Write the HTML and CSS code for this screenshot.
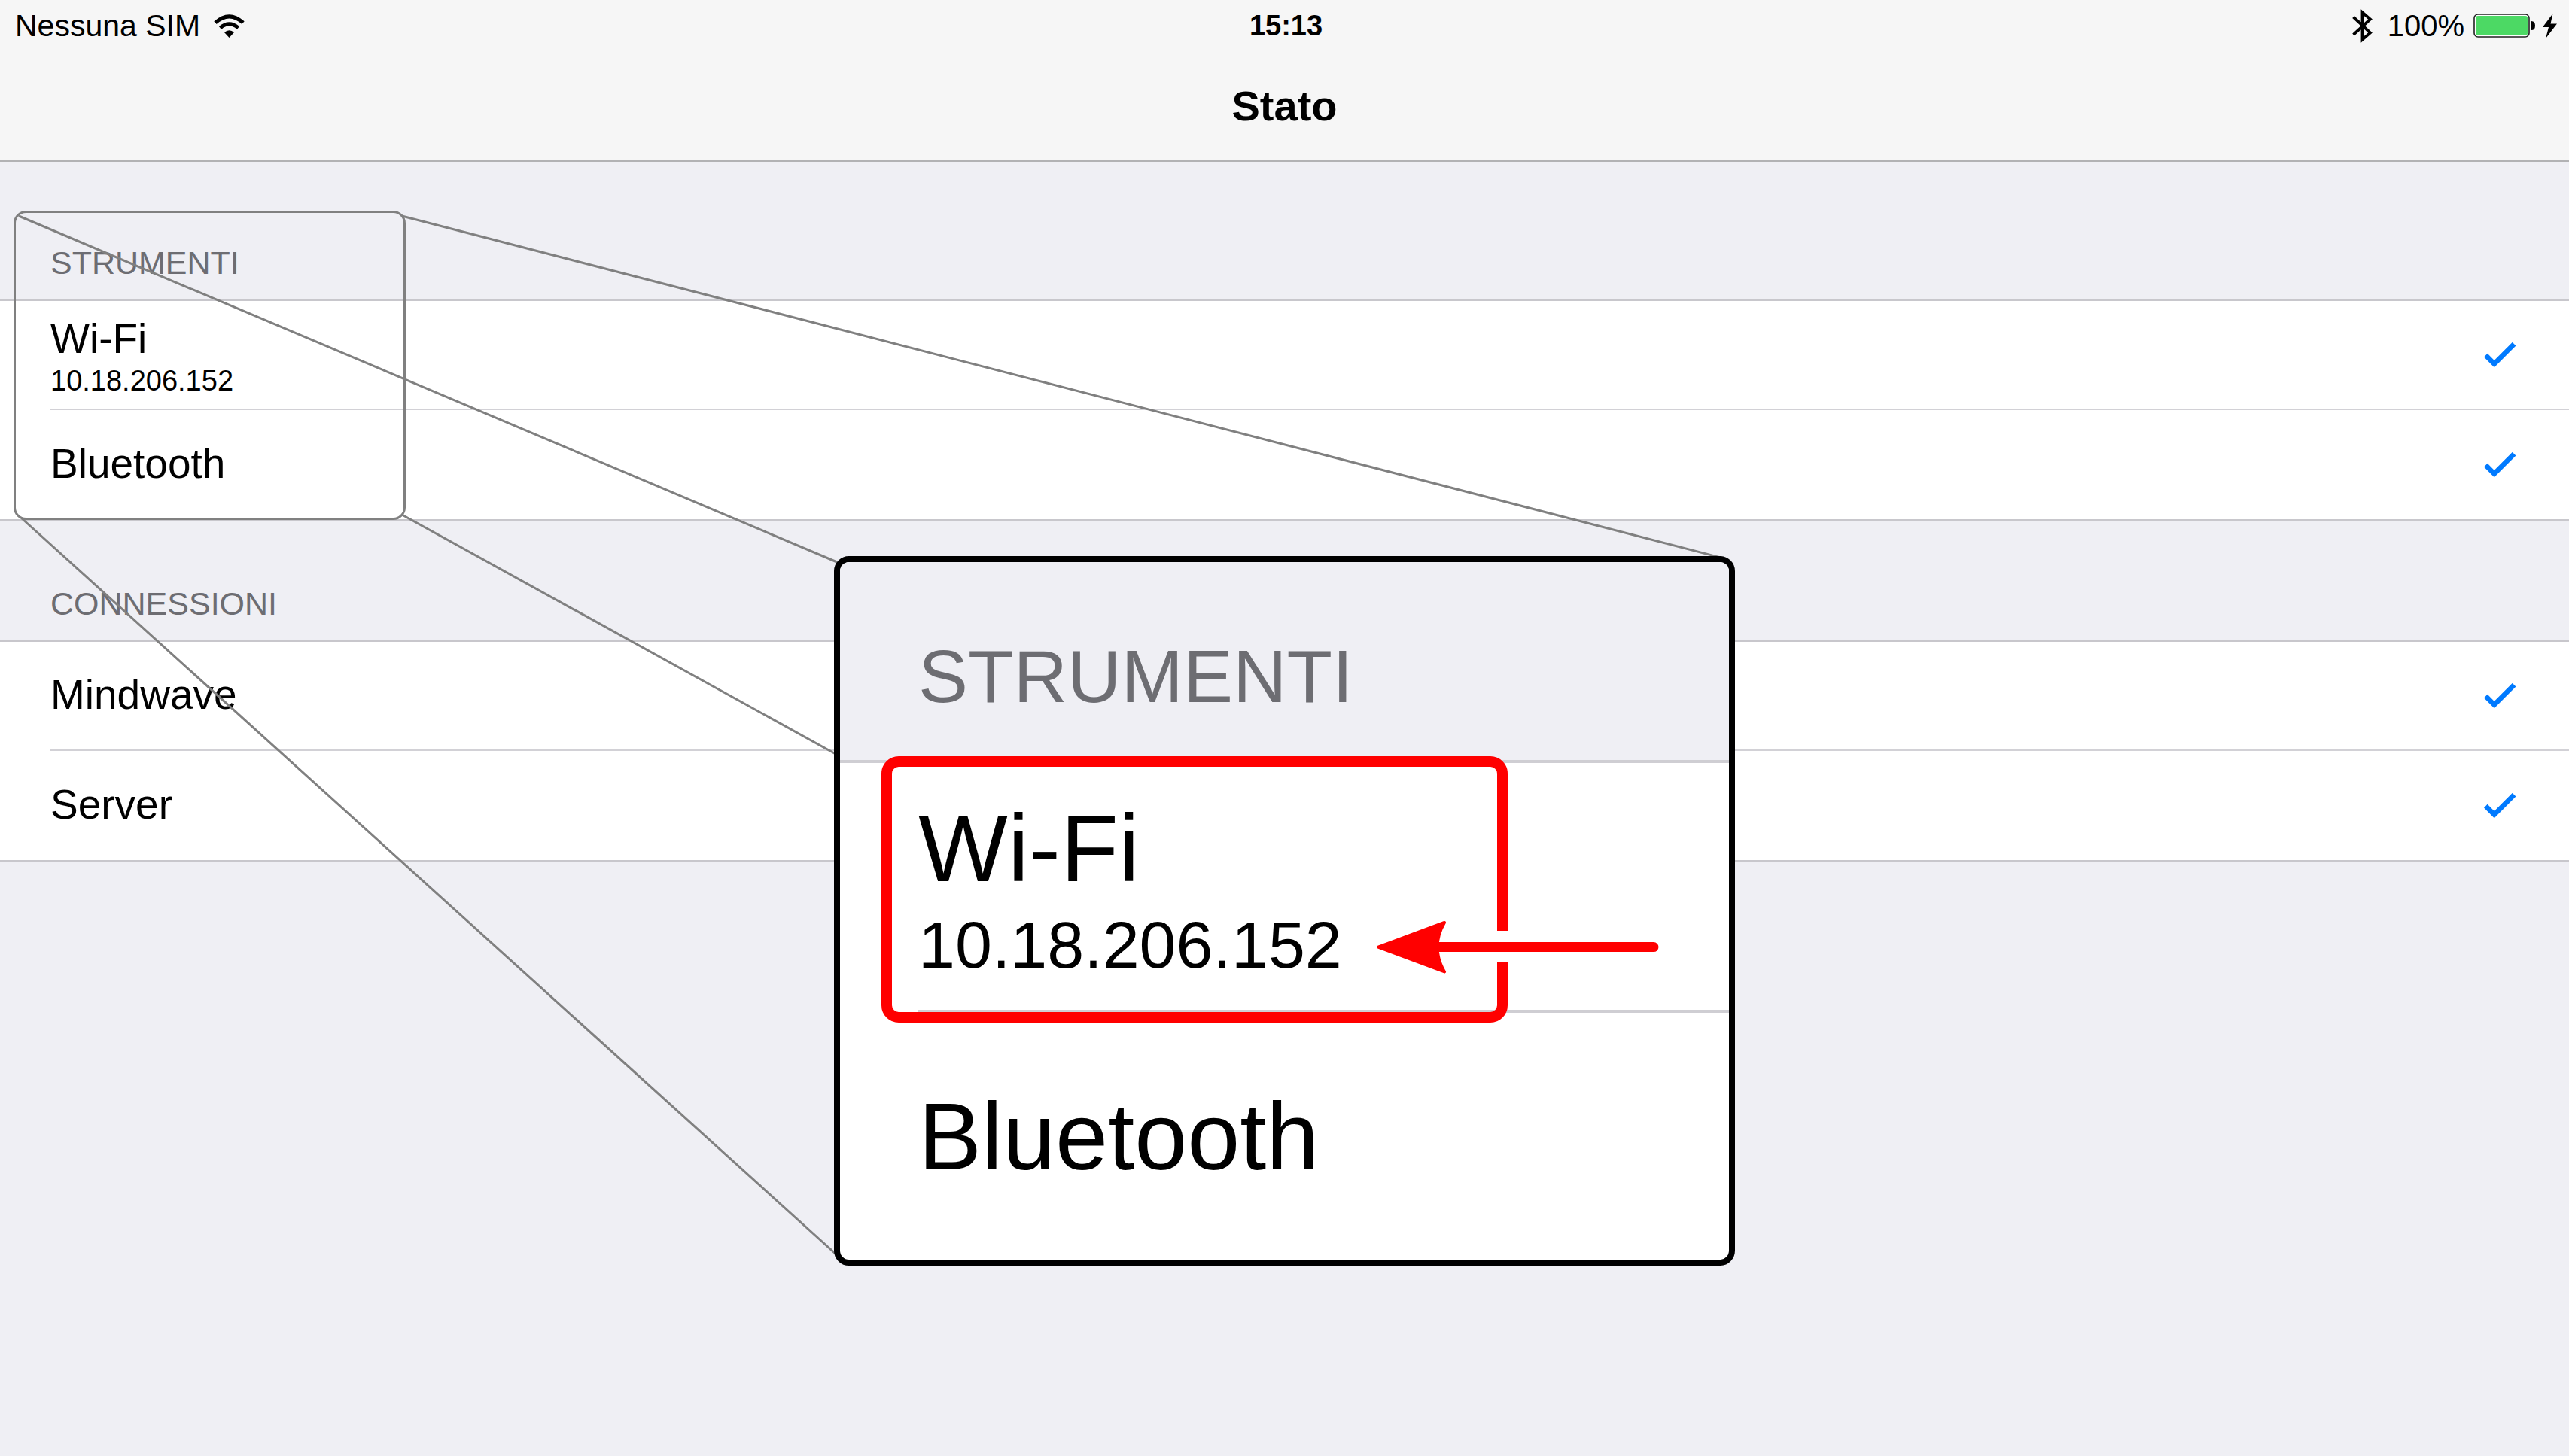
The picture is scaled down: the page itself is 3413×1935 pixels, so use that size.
FILE: index.html
```html
<!DOCTYPE html>
<html lang="it">
<head>
<meta charset="utf-8">
<meta name="viewport" content="width=device-width, initial-scale=1">
<title>Stato</title>
<link rel="stylesheet" href="styles.css">
</head>
<body>
<svg class="defs" aria-hidden="true">
  <symbol id="check" viewBox="0 0 43 34">
    <path d="M2.3 17.2 L13.7 28.6 L40.1 2.2" fill="none" stroke="#007aff" stroke-width="6.6"/>
  </symbol>
</svg>

<header class="top">
  <div class="status">
    <div class="status-left">
      <span>Nessuna SIM</span>
      <svg class="wifi" viewBox="0 0 41 31" aria-label="Wi-Fi">
        <g fill="none" stroke="#000" stroke-width="5">
          <path d="M2 11.2 Q20.500 -5.500 39 11.200"/>
          <path d="M8.500 18 Q20.500 7.500 32.500 18"/>
        </g>
        <path d="M14 24 Q20.500 18.500 27 24 L20.500 31 Z"/>
      </svg>
    </div>
    <time class="clock">15:13</time>
    <div class="status-right">
      <svg class="bt" viewBox="0 0 27 45" aria-label="Bluetooth">
        <path d="M1.500 10.500 L24 31.500 L13.500 40.500 V4.500 L24 13.500 L1.500 34" fill="none" stroke="#000" stroke-width="3.800"/>
      </svg>
      <span class="percent">100%</span>
      <svg class="battery" viewBox="0 0 83 32" aria-label="Batteria">
        <rect x="1" y="1" width="73" height="30" rx="5" fill="#fff" stroke="#222" stroke-width="1.600"/>
        <rect x="3" y="3" width="69" height="26" rx="3" fill="#4cd964"/>
        <path d="M77 10 Q82 10 82 16 Q82 22 77 22 Z"/>
      </svg>
      <svg class="bolt" viewBox="0 0 19 33" aria-label="In carica">
        <path d="M13.500 0 L0 18 H8 L4 33 L19 13.500 H10.500 Z"/>
      </svg>
    </div>
  </div>
  <h1 class="title">Stato</h1>
</header>

<main>
  <section>
    <h2 class="group-title group-title-first">STRUMENTI</h2>
    <ul class="list">
      <li class="row">
        <div class="cell">
          <div class="text text-double"><span class="label">Wi-Fi</span><span class="detail">10.18.206.152</span></div>
          <svg class="check" aria-label="Attivo"><use href="#check"/></svg>
        </div>
      </li>
      <li class="row">
        <div class="cell">
          <div class="text"><span class="label">Bluetooth</span></div>
          <svg class="check" aria-label="Attivo"><use href="#check"/></svg>
        </div>
      </li>
    </ul>
  </section>
  <section>
    <h2 class="group-title">CONNESSIONI</h2>
    <ul class="list">
      <li class="row">
        <div class="cell">
          <div class="text"><span class="label">Mindwave</span></div>
          <svg class="check" aria-label="Attivo"><use href="#check"/></svg>
        </div>
      </li>
      <li class="row">
        <div class="cell">
          <div class="text"><span class="label">Server</span></div>
          <svg class="check" aria-label="Attivo"><use href="#check"/></svg>
        </div>
      </li>
    </ul>
  </section>
</main>

<!-- Magnified area: source frame, projection lines and enlarged copy -->
<svg class="guides" viewBox="0 0 3413 1935" preserveAspectRatio="xMidYMin meet" aria-hidden="true">
  <g fill="none" stroke="#808080" stroke-width="3">
    <rect x="19.500" y="281.500" width="518" height="408" rx="15"/>
    <path d="M25 287 L1112 747 M534 287 L2290 742 M534 684 L1112 1003 M29 689 L1112 1668"/>
  </g>
</svg>

<aside class="callout" aria-label="Ingrandimento">
  <h2 class="callout-title">STRUMENTI</h2>
  <ul class="callout-list">
    <li class="callout-row callout-row-wifi">
      <span class="callout-label">Wi-Fi</span>
      <span class="callout-detail">10.18.206.152</span>
    </li>
    <li class="callout-row callout-row-bt">
      <span class="callout-label">Bluetooth</span>
    </li>
  </ul>
  <svg class="marker" viewBox="0 0 1181 927" aria-hidden="true">
    <g fill="none" stroke="#f00">
      <path stroke-width="14" d="M880 490 V281 A16 16 0 0 0 864 265 H78 A16 16 0 0 0 62 281 V589 A16 16 0 0 0 78 605 H864 A16 16 0 0 0 880 589 V532"/>
      <path stroke-width="13" stroke-linecap="round" d="M790 511.600 H1081"/>
    </g>
    <path fill="#f00" stroke="#f00" stroke-width="4" stroke-linejoin="round" d="M715 511.600 L803 479 Q784 511.600 803 544.500 Z"/>
  </svg>
</aside>
</body>
</html>
```
FILE: styles.css
```css
* {
  box-sizing: border-box;
}

body {
  position: relative;
  min-height: 100vh;
  margin: 0;
  overflow-x: hidden;
  background: #efeff4;
  color: #000;
  font-family: "Liberation Sans", Arial, Helvetica, sans-serif;
}

h1,
h2,
ul {
  margin: 0;
  padding: 0;
  list-style: none;
}

svg {
  display: block;
  flex: none;
}

.defs {
  position: absolute;
  width: 0;
  height: 0;
}

/* Status bar and title */
.top {
  background: #f6f6f6;
  border-bottom: 2px solid #b2b2b4;
}

.status {
  display: grid;
  grid-template-columns: 1fr auto 1fr;
  align-items: center;
  height: 68px;
  padding: 0 16px 0 20px;
  font-size: 41px;
}

.status-left,
.status-right {
  display: flex;
  align-items: center;
}

.status-left {
  gap: 18px;
}

.status-right {
  justify-content: flex-end;
}

.clock {
  font-size: 38px;
  font-weight: 700;
}

.wifi {
  width: 41px;
  height: 31px;
}

.bt {
  width: 27px;
  height: 45px;
  margin-right: 20px;
}

.percent {
  font-size: 40px;
  margin-right: 12px;
}

.battery {
  width: 83px;
  height: 32px;
  margin-right: 9px;
}

.bolt {
  width: 19px;
  height: 33px;
}

.title {
  font-size: 56px;
  line-height: 145px;
  text-align: center;
}

/* Grouped list */
.group-title {
  padding: 85px 67px 24px;
  color: #6d6d72;
  font-size: 43px;
  font-weight: 400;
  line-height: 50px;
}

.group-title-first {
  padding-top: 109px;
}

.list {
  background: #fff;
  border-top: 2px solid #c8c7cc;
  border-bottom: 2px solid #c8c7cc;
}

.row {
  padding-left: 67px;
}

.cell {
  display: flex;
  align-items: center;
  justify-content: space-between;
  height: 145px;
  padding-right: 70px;
}

.row:not(:last-child) .cell {
  border-bottom: 2px solid #d2d1d6;
}

.text {
  display: flex;
  flex-direction: column;
  gap: 4px;
  padding-bottom: 4px;
}

.text-double {
  padding: 4px 0 0;
}

.label {
  font-size: 55px;
  line-height: 60px;
}

.detail {
  font-size: 38px;
  line-height: 44px;
}

.check {
  width: 43px;
  height: 34px;
}

/* Magnifier overlay */
.guides {
  position: absolute;
  top: 0;
  left: 0;
  width: 100%;
}

.callout {
  position: absolute;
  top: 739px;
  left: 0;
  right: 0;
  width: 1197px;
  margin: 0 auto;
  overflow: hidden;
  background: #fff;
  border: 8px solid #000;
  border-radius: 20px;
}

.callout-title {
  padding: 102px 104px 61px;
  background: #efeff4;
  color: #6d6d72;
  font-size: 99px;
  font-weight: 400;
  line-height: 100px;
}

.callout-list {
  border-top: 4px solid #cfced3;
}

.callout-row {
  display: flex;
  flex-direction: column;
  margin-left: 104px;
}

.callout-row-wifi {
  gap: 13px;
  padding: 49px 0 36px;
  border-bottom: 4px solid #cfced3;
}

.callout-row-bt {
  padding: 100px 0 98px;
}

.callout-label {
  font-size: 126px;
  line-height: 130px;
}

.callout-detail {
  font-size: 88px;
  line-height: 100px;
}

.marker {
  position: absolute;
  top: 0;
  left: 0;
  width: 100%;
}
```
